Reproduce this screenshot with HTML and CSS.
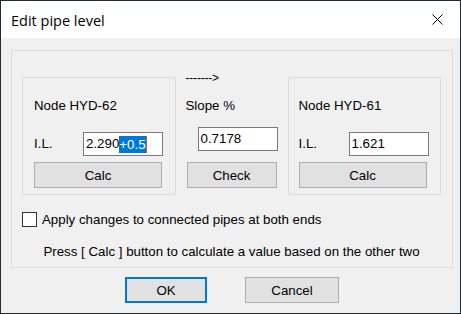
FILE: index.html
```html
<!DOCTYPE html>
<html lang="en">
<head>
  <meta charset="UTF-8" />
  <title>Edit pipe level</title>
  <link rel="stylesheet" href="styles.css">
</head>
<body>

<div class="window">
  <div class="titlebar">
    <span class="title">Edit pipe level</span>
    <svg class="close" width="11" height="11" viewBox="0 0 11 11">
      <path d="M0.5 0.5 L10.5 10.5 M10.5 0.5 L0.5 10.5" stroke="#000" stroke-width="1" fill="none" />
    </svg>
  </div>

  <div class="content">
    <div class="group">
      <div class="columns">
        <div class="node-box">
          <div class="node-name">Node HYD-62</div>
          <div class="field-row">
            <span class="field-label">I.L.</span>
            <div class="textbox">2.290<span class="selected">+0.5</span><span class="caret"></span></div>
          </div>
          <div class="btn btn-wide">Calc</div>
        </div>

        <div class="slope-col">
          <div class="arrow">-------&gt;</div>
          <div class="slope-label">Slope %</div>
          <div class="textbox slope-box">0.7178</div>
          <div class="btn btn-check">Check</div>
        </div>

        <div class="node-box node-right">
          <div class="node-name">Node HYD-61</div>
          <div class="field-row">
            <span class="field-label">I.L.</span>
            <div class="textbox">1.621</div>
          </div>
          <div class="btn btn-wide">Calc</div>
        </div>
      </div>

      <label class="check-row">
        <span class="checkbox"></span>
        <span>Apply changes to connected pipes at both ends</span>
      </label>

      <div class="hint">Press [ Calc ] button to calculate a value based on the other two</div>
    </div>

    <div class="actions">
      <div class="btn btn-ok">OK</div>
      <div class="btn btn-cancel">Cancel</div>
    </div>
  </div>
</div>

</body>
</html>
```

FILE: styles.css
```css
:root {
  --frame: #1f2a33;
  --face: #f0f0f0;
  --group-line: #dcdcdc;
  --btn-face: #e1e1e1;
  --btn-line: #adadad;
  --accent: #0078d7;
}

* {
  box-sizing: border-box;
}

body {
  margin: 0;
  background: var(--face);
  font-family: 'Liberation Sans', Arial, sans-serif;
  font-size: 13.3px;
  color: #000;
}

.window {
  width: 461px;
  height: 314px;
  border: 1px solid var(--frame);
  background: var(--face);
  display: flex;
  flex-direction: column;
}

.titlebar {
  height: 37px;
  background: #fff;
  display: flex;
  align-items: center;
  justify-content: space-between;
  padding: 0 17px 0 10px;
}

.title {
  font-family: 'Open Sans', 'Noto Sans', sans-serif;
  font-size: 14.5px;
  margin-top: 1px;
}

.close {
  display: block;
}

.content {
  padding: 12px 7px 0 10px;
}

.group {
  border: 1px solid var(--group-line);
  height: 218px;
  padding: 26px 11px 0 10px;
}

.columns {
  display: flex;
  align-items: flex-start;
}

.node-box {
  width: 154px;
  height: 118px;
  border: 1px solid var(--group-line);
  padding: 20px 0 0 11px;
}

.node-right {
  margin-left: 10px;
  padding-left: 10px;
}

.node-name {
  line-height: 15px;
  white-space: nowrap;
}

.field-row {
  display: flex;
  align-items: flex-start;
  margin-top: 19px;
}

.field-label {
  width: 49px;
  padding-top: 4px;
  line-height: 15px;
}

.node-right .field-label {
  width: 50px;
}

.textbox {
  width: 80px;
  height: 24px;
  border: 1px solid #7a7a7a;
  background: #fff;
  padding: 0 0 0 2px;
  line-height: 22px;
  white-space: nowrap;
  display: flex;
  align-items: center;
}

.selected {
  background: var(--accent);
  color: #fff;
  line-height: 17px;
}

.caret {
  width: 1px;
  height: 17px;
  background: #c8601a;
}

.btn {
  height: 26px;
  background: var(--btn-face);
  border: 1px solid var(--btn-line);
  display: flex;
  align-items: center;
  justify-content: center;
}

.btn-wide {
  width: 128px;
  margin-top: 6px;
}

.slope-col {
  width: 91px;
  margin-left: 11px;
  margin-top: -6px;
  display: flex;
  flex-direction: column;
  align-items: flex-start;
}

.arrow {
  line-height: 14px;
  margin-left: -1px;
  font-size: 12px;
  letter-spacing: -0.2px;
}

.slope-label {
  margin-top: 13px;
  margin-left: -1px;
  line-height: 15px;
}

.slope-box {
  margin-top: 14px;
  margin-left: 11px;
}

.btn-check {
  width: 90px;
  margin-top: 11px;
}

.check-row {
  display: flex;
  align-items: center;
  gap: 5px;
  margin-top: 17px;
  line-height: 15px;
}

.checkbox {
  width: 15px;
  height: 15px;
  border: 1px solid #333;
  background: #fff;
}

.hint {
  text-align: center;
  margin-top: 17px;
  line-height: 15px;
}

.actions {
  display: flex;
  justify-content: center;
  gap: 38px;
  margin-top: 9px;
}

.btn-ok {
  width: 82px;
  border: 2px solid var(--accent);
}

.btn-cancel {
  width: 94px;
}
```
